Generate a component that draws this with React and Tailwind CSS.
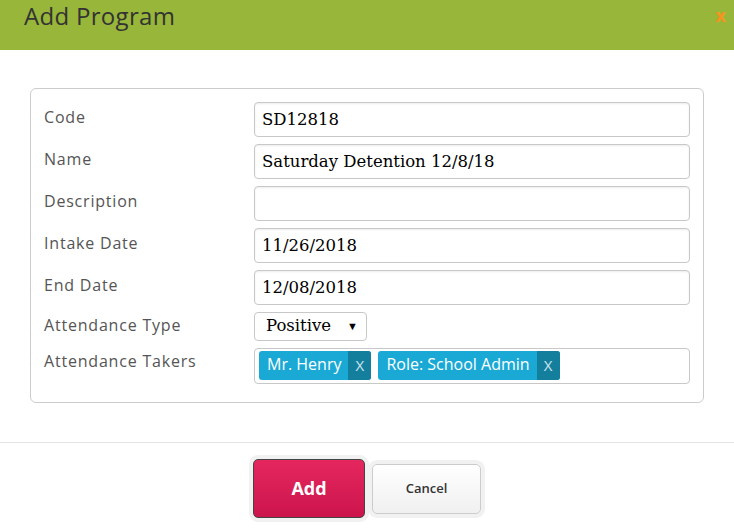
import React from "react";

const sans = { fontFamily: '"Open Sans", "Liberation Sans", sans-serif' };
const serif = { fontFamily: '"DejaVu Serif", "Liberation Serif", serif' };

const rows = [
  { label: "Code", value: "SD12818" },
  { label: "Name", value: "Saturday Detention 12/8/18" },
  { label: "Description", value: "" },
  { label: "Intake Date", value: "11/26/2018" },
  { label: "End Date", value: "12/08/2018" },
];

const Tag = ({ children }) => (
  <div className="flex h-[29px] items-stretch rounded-[3px] overflow-hidden bg-[#1aa9d5] text-white">
    <span className="pl-[8px] pr-[7px] text-[16px] leading-[27px]">{children}</span>
    <span className="w-[23px] bg-[#137f9d] text-[#cfe6ee] text-[15px] leading-[29px] text-center">X</span>
  </div>
);

export default function App() {
  return (
    <div className="w-[734px] h-[529px] overflow-hidden bg-white" style={sans}>
      {/* Header */}
      <div className="h-[50px] bg-[#98b639] flex items-start justify-between pl-[24px] pr-[8px]">
        <h1 className="text-[24px] leading-[32px] text-[#333] tracking-[0.3px]">Add Program</h1>
        <span className="mt-[5px] text-[18px] font-bold text-[#f7931e] leading-[20px]">x</span>
      </div>

      {/* Form panel */}
      <div className="mt-[38px] mx-[30px] border border-[#cccccc] rounded-[6px] pt-[13px] pb-[18px] pl-[13px] pr-[13px]">
        <div className="flex flex-col gap-[7px]">
          {rows.map((r) => (
            <div key={r.label} className="flex items-start">
              <div className="w-[210px] pt-[3px] text-[16px] leading-6 text-[#555] tracking-[0.8px]">{r.label}</div>
              <div
                className="flex-1 h-[35px] border border-[#c8c8c8] rounded-[4px] shadow-[inset_0_1px_2px_rgba(0,0,0,0.08)] pl-[7px] text-[16.5px] leading-[33px] text-black"
                style={serif}
              >
                {r.value}
              </div>
            </div>
          ))}
          <div className="flex items-start">
            <div className="w-[210px] pt-[1px] text-[16px] leading-6 text-[#555] tracking-[0.8px]">Attendance Type</div>
            <div
              className="w-[113px] h-[29px] border border-[#c8c8c8] rounded-[4px] flex items-center justify-between pl-[11px] pr-[8px] text-[16.5px] text-black"
              style={serif}
            >
              <span className="leading-[25px] -mt-[3px]">Positive</span>
              <span className="text-[11px]" style={sans}>▼</span>
            </div>
          </div>
          <div className="flex items-start">
            <div className="w-[210px] pt-[1px] text-[16px] leading-6 text-[#555] tracking-[0.8px]">Attendance Takers</div>
            <div className="flex-1 h-[36px] border border-[#c8c8c8] rounded-[4px] flex items-start gap-[7px] pl-[4px] pt-[2px]">
              <Tag>Mr. Henry</Tag>
              <Tag>Role: School Admin</Tag>
            </div>
          </div>
        </div>
      </div>

      {/* Footer */}
      <div className="mt-[39px] border-t border-[#e3e3e3] flex justify-center items-center gap-[7px] pt-[16px]">
        <button className="w-[112px] h-[59px] rounded-[5px] border border-[#444] bg-gradient-to-b from-[#e5265f] to-[#cc144c] text-white font-bold text-[18px] ring-4 ring-[#f1f1f1]">
          Add
        </button>
        <button className="w-[109px] h-[50px] rounded-[5px] border border-[#cccccc] bg-gradient-to-b from-white to-[#f0f0f0] text-[#333] font-semibold text-[13px] ring-4 ring-[#f1f1f1]">
          Cancel
        </button>
      </div>
    </div>
  );
}
